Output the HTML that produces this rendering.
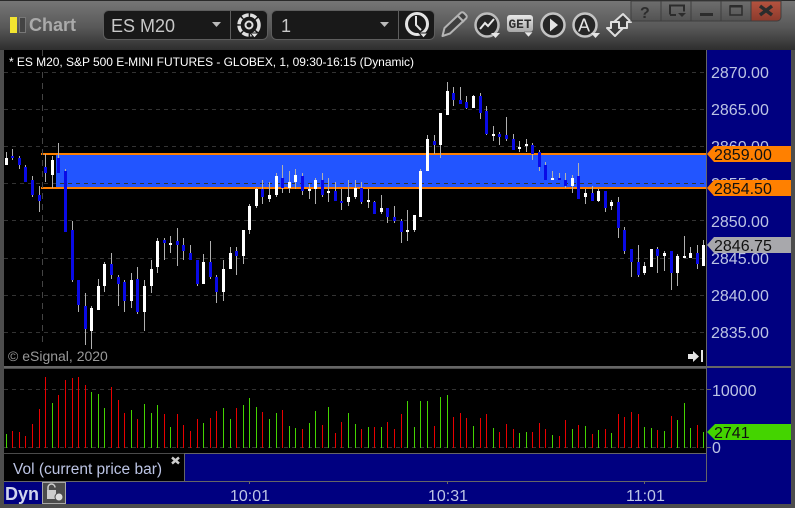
<!DOCTYPE html>
<html><head><meta charset="utf-8"><style>
html,body{margin:0;padding:0;background:#333;width:795px;height:508px;overflow:hidden}
svg{display:block;font-family:"Liberation Sans",sans-serif}
</style></head><body>
<svg width="795" height="508" viewBox="0 0 795 508" xmlns="http://www.w3.org/2000/svg">
<defs>
<linearGradient id="tb" x1="0" y1="0" x2="0" y2="1"><stop offset="0" stop-color="#777"/><stop offset=".55" stop-color="#585858"/><stop offset="1" stop-color="#2e2e2e"/></linearGradient>
<linearGradient id="btn" x1="0" y1="0" x2="0" y2="1"><stop offset="0" stop-color="#6e6e6e"/><stop offset="1" stop-color="#525252"/></linearGradient>
<linearGradient id="red" x1="0" y1="0" x2="0" y2="1"><stop offset="0" stop-color="#b5533f"/><stop offset="1" stop-color="#8c3a2c"/></linearGradient>
<linearGradient id="ic" x1="0" y1="0" x2="0" y2="1"><stop offset="0" stop-color="#e8e8e8"/><stop offset="1" stop-color="#a8a8a8"/></linearGradient>
</defs>
<rect width="795" height="508" fill="#4a4a4a"/>
<rect x="0" y="0" width="795" height="50" fill="url(#tb)"/>
<rect x="0" y="0" width="795" height="1" fill="#2a2a2a"/>
<rect x="0" y="50" width="4" height="458" fill="#4d4d4d"/>
<rect x="791" y="50" width="4" height="458" fill="#4d4d4d"/>
<rect x="0" y="504" width="795" height="4" fill="#4d4d4d"/>

<!-- title -->
<rect x="10" y="17" width="7" height="16" fill="#f2e430"/>
<rect x="19.5" y="17.5" width="6" height="15" fill="#444" stroke="#777"/>
<text x="29" y="31" font-size="18" font-weight="bold" fill="#aaa">Chart</text>

<!-- dropdown 1 -->
<rect x="103.5" y="10.5" width="164" height="29" rx="5" fill="#191919" stroke="#5e5e5e"/>
<line x1="230.5" y1="11" x2="230.5" y2="39" stroke="#5e5e5e"/>
<text x="111" y="32" font-size="18" fill="#c8c8c8">ES M20</text>
<path d="M212 22h9l-4.500 5z" fill="#bbb"/>
<circle cx="249" cy="25" r="10" fill="none" stroke="#e0e0e0" stroke-width="3.500" stroke-dasharray="6.500 1.500"/>
<circle cx="249" cy="25" r="3.500" fill="none" stroke="#e0e0e0" stroke-width="2"/>
<path d="M250 33h9l-4.500 5z" fill="#e6e6e6" stroke="#191919"/>

<!-- dropdown 2 -->
<rect x="271.500" y="10.500" width="163" height="29" rx="5" fill="#191919" stroke="#5e5e5e"/>
<line x1="398.500" y1="11" x2="398.500" y2="39" stroke="#5e5e5e"/>
<text x="281" y="32" font-size="18" fill="#c8c8c8">1</text>
<path d="M380 22h9l-4.500 5z" fill="#bbb"/>
<circle cx="417" cy="24" r="10.500" fill="none" stroke="#e4e4e4" stroke-width="3"/>
<path d="M416 16v9l5 5" fill="none" stroke="#e4e4e4" stroke-width="2"/>
<path d="M419 33h9l-4.500 5z" fill="#e4e4e4" stroke="#191919"/>

<!-- pencil -->
<path d="M442.500 36l2-8 16-15a2.500 2.500 0 0 1 3.500 0l2 2a2.500 2.500 0 0 1 0 3.500l-16 15z" fill="#3f3f3f" stroke="#b4b4b4" stroke-width="2" stroke-linejoin="round"/>
<path d="M458 16l6 6" stroke="#b4b4b4" stroke-width="2"/>
<!-- chart circle -->
<circle cx="487" cy="25" r="11.500" fill="#262626" stroke="#bdbdbd" stroke-width="2.500"/>
<path d="M480 29l5-6 3 3 6-7" fill="none" stroke="#e8e8e8" stroke-width="2"/>
<path d="M491 33h9l-4.500 5z" fill="#e6e6e6"/>
<!-- GET -->
<rect x="507" y="15" width="26" height="17" rx="3" fill="url(#ic)"/>
<text x="508.500" y="28" font-size="13" font-weight="bold" fill="#2e2e2e" font-family="Liberation Mono, monospace" textLength="23" lengthAdjust="spacingAndGlyphs">GET</text>
<path d="M524 32h9l-4.500 5z" fill="#e6e6e6" stroke="#444" stroke-width=".5"/>
<!-- play -->
<circle cx="553" cy="25" r="11.500" fill="#262626" stroke="#c4c4c4" stroke-width="2.500"/>
<path d="M550 18.500l8 6.500-8 6.500z" fill="#e4e4e4"/>
<!-- A -->
<circle cx="585" cy="25" r="11.500" fill="#262626" stroke="#c4c4c4" stroke-width="2.500"/>
<text x="578" y="31.500" font-size="18" fill="#e4e4e4">A</text>
<path d="M591 33h9l-4.500 5z" fill="#e6e6e6"/>
<!-- swap arrows -->
<path d="M623 14l8 8h-4v6h-9v-6h-4z" fill="#3a3a3a" stroke="#ddd" stroke-width="2" stroke-linejoin="round"/>
<path d="M615 36l-8-8h4v-6h8v6h4z" fill="#3a3a3a" stroke="#ddd" stroke-width="2" stroke-linejoin="round"/>

<!-- window buttons -->
<rect x="631" y="1" width="30" height="20" fill="url(#btn)" stroke="#3e3e3e"/>
<rect x="661" y="1" width="30" height="20" fill="url(#btn)" stroke="#3e3e3e"/>
<rect x="691" y="1" width="30" height="20" fill="url(#btn)" stroke="#3e3e3e"/>
<rect x="721" y="1" width="30" height="20" fill="url(#btn)" stroke="#3e3e3e"/>
<path d="M751 1h30v16a4 4 0 0 1-4 4h-26z" fill="url(#red)" stroke="#3e3e3e"/>
<text x="640" y="18" font-size="16" font-weight="bold" fill="#2c2c2c">?</text>
<path d="M670 14.500v-9h14v6" fill="none" stroke="#2c2c2c" stroke-width="2"/>
<path d="M670 15h6" stroke="#2c2c2c" stroke-width="2"/>
<path d="M678 13h8l-4 4z" fill="#2c2c2c"/>
<rect x="700" y="13" width="13" height="3" fill="#2c2c2c"/>
<rect x="730" y="6" width="12" height="9" fill="none" stroke="#2c2c2c" stroke-width="1.500"/>
<rect x="730" y="5" width="12" height="2.500" fill="#2c2c2c"/>
<path d="M760 6l12 9M772 6l-12 9" stroke="#2c2c2c" stroke-width="3.500"/>

<!-- panes -->
<rect x="4" y="50" width="702" height="317" fill="#000"/>
<rect x="4" y="369" width="702" height="84" fill="#000"/>
<rect x="707" y="50" width="84" height="454" fill="#000080"/>
<rect x="4" y="454" width="180" height="27" fill="#000"/>
<rect x="185" y="454" width="521" height="27" fill="#000080"/>
<rect x="4" y="482" width="703" height="22" fill="#000080"/>

<!-- band -->
<rect x="56" y="155" width="650" height="32" fill="#2255ff"/>
<rect x="41" y="153" width="665" height="2" fill="#ff8000"/>
<rect x="41" y="187" width="665" height="2" fill="#ff8000"/>

<!-- grid -->
<g stroke="#333" stroke-dasharray="4 4" shape-rendering="crispEdges">
<path d="M4 72.500H706M4 109.500H706M4 146.500H706M4 220.500H706M4 258.500H706M4 295.500H706M4 332.500H706M4 389.500H706M4 447.500H706"/>
<path d="M42.500 50V346" stroke-dasharray="6 5" stroke="#444"/>
</g>
<path d="M4 183.500H706" stroke="#333" stroke-dasharray="4 4" shape-rendering="crispEdges"/>

<!-- wicks -->
<path fill="none" stroke="#b0b0b0" stroke-width="1" shape-rendering="crispEdges" d="M6.500 152V165M12.500 149V160M19.500 156V169M25.500 165V182M32.500 176V197M39.500 186V212M45.500 154V182M52.500 156V188M58.500 143V173M65.500 169V232M72.500 221V282M78.500 280V312M85.500 293V345M91.500 306V349M98.500 279V310M104.500 262V292M111.500 253V279M118.500 275V306M124.500 280V312M131.500 273V308M137.500 267V314M144.500 280V331M151.500 260V293M157.500 238V273M164.500 238V260M170.500 236V253M177.500 228V266M183.500 238V260M190.500 245V260M197.500 260V286M203.500 254V284M210.500 241V279M216.500 275V303M223.500 260V301M230.500 247V269M236.500 247V275M243.500 230V264M249.500 204V234M256.500 188V208M262.500 180V204M269.500 182V202M276.500 173V197M282.500 165V193M289.500 171V193M295.500 169V189M302.500 173V195M309.500 184V199M315.500 178V204M322.500 173V197M328.500 178V202M335.500 182V201M341.500 189V210M348.500 180V206M355.500 180V199M361.500 182V204M368.500 189V208M374.500 201V214M381.500 195V214M387.500 208V223M394.500 206V223M401.500 219V243M407.500 210V241M414.500 215V232M420.500 169V217M427.500 135V171M434.500 135V154M440.500 113V158M447.500 82V115M453.500 87V106M460.500 87V104M466.500 96V109M473.500 95V108M480.500 93V119M486.500 106V135M493.500 126V141M499.500 132V145M506.500 117V141M513.500 134V150M519.500 141V152M526.500 139V152M532.500 143V160M539.500 150V171M545.500 162V180M552.500 171V180M559.500 173V180M565.500 173V188M572.500 175V193M578.500 163V199M585.500 189V204M592.500 186V201M598.500 189V202M605.500 191V212M611.500 200V210M618.500 197V238M624.500 227V254M631.500 249V277M638.500 245V277M644.500 262V275M651.500 249V267M657.500 247V273M664.500 251V271M671.500 251V290M677.500 254V286M684.500 236V258M690.500 247V258M697.500 245V269M703.500 240V266"/>
<!-- blue bodies -->
<path fill="none" stroke="#0a0ae6" stroke-width="3" shape-rendering="crispEdges" d="M12.500 156V158M19.500 158V165M25.500 167V182M32.500 180V195M39.500 195V201M45.500 167V173M58.500 158V173M65.500 171V232M72.500 230V280M78.500 280V305M85.500 306V329M111.500 264V275M118.500 277V284M124.500 282V301M137.500 279V312M164.500 240V243M177.500 241V245M183.500 245V251M190.500 253V260M197.500 260V284M210.500 262V277M216.500 277V292M236.500 251V256M262.500 189V197M282.500 178V188M302.500 176V191M322.500 180V195M335.500 191V201M341.500 201V203M361.500 188V202M374.500 202V214M387.500 208V217M394.500 217V221M401.500 221V232M434.500 141V145M453.500 93V100M460.500 100V104M466.500 102V108M480.500 96V113M486.500 111V134M499.500 134V137M506.500 135V139M513.500 139V150M532.500 145V154M539.500 152V167M545.500 165V180M559.500 178V180M565.500 180V186M578.500 176V199M592.500 193V201M605.500 191V208M618.500 202V228M624.500 230V251M631.500 249V262M638.500 262V275M657.500 249V256M671.500 251V273M697.500 253V264"/>
<!-- white bodies -->
<path fill="none" stroke="#fff" stroke-width="3" shape-rendering="crispEdges" d="M6.500 158V165M52.500 160V175M91.500 308V331M98.500 286V310M104.500 264V286M131.500 280V301M144.500 286V312M151.500 269V286M157.500 241V267M170.500 243V245M203.500 262V284M223.500 269V292M230.500 253V269M243.500 230V256M249.500 206V230M256.500 189V206M269.500 195V199M276.500 176V195M289.500 182V188M295.500 175V182M309.500 189V191M315.500 180V189M328.500 191V193M348.500 197V202M355.500 188V197M368.500 200V202M381.500 208V212M407.500 230V232M414.500 215V230M420.500 171V217M427.500 139V171M440.500 113V145M447.500 91V115M473.500 96V108M493.500 134V136M519.500 147V149M526.500 144V146M552.500 178V180M572.500 178V186M585.500 193V197M598.500 191V201M611.500 202V206M644.500 266V273M651.500 249V267M664.500 253V256M677.500 256V273M684.500 256V258M690.500 253V258M703.500 245V266"/>

<!-- volume -->
<path fill="none" stroke="#e80000" stroke-width="1" shape-rendering="crispEdges" d="M12.500 431V448M19.500 432V448M25.500 436V448M32.500 424V448M39.500 409V448M45.500 377V448M58.500 395V448M65.500 380V448M72.500 378V448M78.500 377V448M85.500 385V448M111.500 387V448M118.500 400V448M124.500 413V448M137.500 419V448M164.500 414V448M177.500 414V448M183.500 425V448M190.500 431V448M197.500 419V448M210.500 418V448M216.500 411V448M236.500 408V448M262.500 412V448M282.500 410V448M302.500 429V448M322.500 425V448M335.500 433V448M341.500 422V448M361.500 429V448M374.500 427V448M387.500 422V448M394.500 429V448M401.500 414V448M434.500 426V448M453.500 417V448M460.500 413V448M466.500 418V448M480.500 418V448M486.500 414V448M499.500 432V448M506.500 424V448M513.500 429V448M532.500 432V448M539.500 423V448M545.500 429V448M559.500 436V448M565.500 420V448M578.500 425V448M592.500 434V448M605.500 429V448M618.500 414V448M624.500 417V448M631.500 412V448M638.500 414V448M657.500 430V448M671.500 416V448M697.500 425V448"/>
<path fill="none" stroke="#44d400" stroke-width="1" shape-rendering="crispEdges" d="M6.500 434V448M52.500 403V448M91.500 392V448M98.500 394V448M104.500 408V448M131.500 410V448M144.500 404V448M151.500 413V448M157.500 405V448M170.500 427V448M203.500 423V448M223.500 408V448M230.500 419V448M243.500 405V448M249.500 398V448M256.500 407V448M269.500 419V448M276.500 413V448M289.500 426V448M295.500 428V448M309.500 423V448M315.500 411V448M328.500 407V448M348.500 413V448M355.500 424V448M368.500 427V448M381.500 427V448M407.500 401V448M414.500 427V448M420.500 401V448M427.500 401V448M440.500 397V448M447.500 395V448M473.500 426V448M493.500 428V448M519.500 433V448M526.500 432V448M552.500 435V448M572.500 429V448M585.500 426V448M598.500 430V448M611.500 433V448M644.500 427V448M651.500 428V448M664.500 431V448M677.500 420V448M684.500 403V448M690.500 428V448M703.500 432V448"/>

<!-- separators -->
<g fill="#666" shape-rendering="crispEdges">
<rect x="4" y="366" width="787" height="2"/>
<rect x="706" y="50" width="1" height="432"/>
<rect x="184" y="453" width="523" height="1"/>
<rect x="184" y="454" width="1" height="27"/>
<rect x="4" y="481" width="703" height="1"/>
<rect x="249" y="482" width="1" height="2"/>
<rect x="447" y="482" width="1" height="2"/>
<rect x="644" y="482" width="1" height="2"/>
<rect x="707" y="389" width="4" height="1"/>
<rect x="707" y="447" width="4" height="1"/>
</g>

<!-- chart labels -->
<text x="9" y="66" font-size="12" fill="#fff" textLength="405">* ES M20, S&amp;P 500 E-MINI FUTURES - GLOBEX, 1, 09:30-16:15 (Dynamic)</text>
<text x="8" y="361" font-size="14" fill="#999">© eSignal, 2020</text>
<path d="M688 354h5v-3l6 5.500-6 5.500v-3h-5z" fill="#e4e4e4"/>
<rect x="701" y="350" width="2" height="12" fill="#e4e4e4"/>

<!-- axis -->
<g font-size="16" fill="#bcc4e4">
<text x="711" y="78">2870.00</text>
<text x="711" y="115">2865.00</text>
<text x="711" y="152">2860.00</text>
<text x="711" y="189">2855.00</text>
<text x="711" y="227">2850.00</text>
<text x="711" y="264">2845.00</text>
<text x="711" y="301">2840.00</text>
<text x="711" y="338">2835.00</text>
<text x="712" y="396">10000</text>
<text x="712" y="453">0</text>
</g>
<path d="M707 154l7-8h77v16h-77z" fill="#ff8000"/>
<path d="M707 188l7-8h77v16h-77z" fill="#ff8000"/>
<path d="M707 245l7-8h77v16h-77z" fill="#a8a8ac"/>
<path d="M707 432l8-8h76v16h-76z" fill="#44d400"/>
<g font-size="16" fill="#111">
<text x="714" y="160">2859.00</text>
<text x="714" y="194">2854.50</text>
<text x="714" y="251">2846.75</text>
<text x="714" y="438">2741</text>
</g>

<!-- vol legend -->
<text x="13" y="474" font-size="15.500" fill="#bcc4e4">Vol (current price bar)</text>
<path d="M172 457.500l7 6M179 457.500l-7 6" stroke="#ccc" stroke-width="2.500"/>

<!-- time axis -->
<text x="5" y="500" font-size="18" font-weight="bold" fill="#d0d4ec">Dyn</text>
<rect x="42.500" y="482.500" width="23" height="21" fill="#4c4c4c" stroke="#a8a8a8"/>
<path d="M48 490v-2.500a3.500 3.500 0 0 1 7 0" fill="none" stroke="#ccc" stroke-width="1.500"/>
<rect x="47" y="490" width="9" height="9" fill="#ccc"/>
<circle cx="59" cy="497" r="4" fill="#ddd" stroke="#4c4c4c"/>
<g font-size="16" fill="#bcc4e4">
<text x="230" y="501">10:01</text>
<text x="428" y="501">10:31</text>
<text x="626" y="501">11:01</text>
</g>
</svg>
</body></html>
